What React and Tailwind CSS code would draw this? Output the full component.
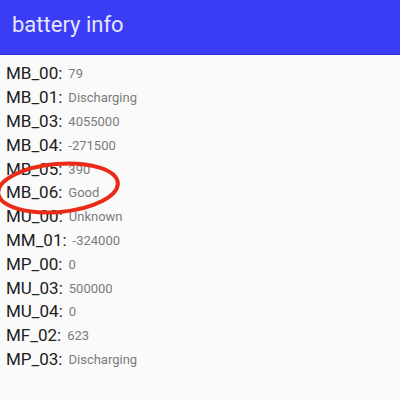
import React from 'react';

const rows = [
  ['MB_00', '79'],
  ['MB_01', 'Discharging'],
  ['MB_03', '4055000'],
  ['MB_04', '-271500'],
  ['MB_05', '390'],
  ['MB_06', 'Good'],
  ['MU_00', 'Unknown'],
  ['MM_01', '-324000'],
  ['MP_00', '0'],
  ['MU_03', '500000'],
  ['MU_04', '0'],
  ['MF_02', '623'],
  ['MP_03', 'Discharging'],
];

export default function App() {
  return (
    <div className="relative w-[400px] h-[400px] overflow-hidden bg-[#fafafa] font-['Roboto',sans-serif]">
      {/* Toolbar */}
      <div className="h-[55px] bg-[#3b3cf6] border-b border-[#2f30d8] flex items-center px-3">
        <h1 className="text-[22px] text-[#e6e6ff] leading-none pb-1">battery info</h1>
      </div>

      {/* List */}
      <div className="pt-[7px] pl-[6px]">
        {rows.map(([k, v]) => (
          <div key={k} className="h-[23.8px] flex items-center">
            <span className="text-[17px] text-[#202020] leading-none">{k}:</span>
            <span className="ml-[6px] text-[13px] text-[#7a7a7a] leading-none">{v}</span>
          </div>
        ))}
      </div>

      {/* red marker circle */}
      <svg className="absolute left-0 top-0 pointer-events-none" width="400" height="400">
        <ellipse cx="58" cy="188" rx="60" ry="24" fill="none" stroke="#ea2b16" strokeWidth="4" transform="rotate(-5 58 188)" />
      </svg>
    </div>
  );
}
